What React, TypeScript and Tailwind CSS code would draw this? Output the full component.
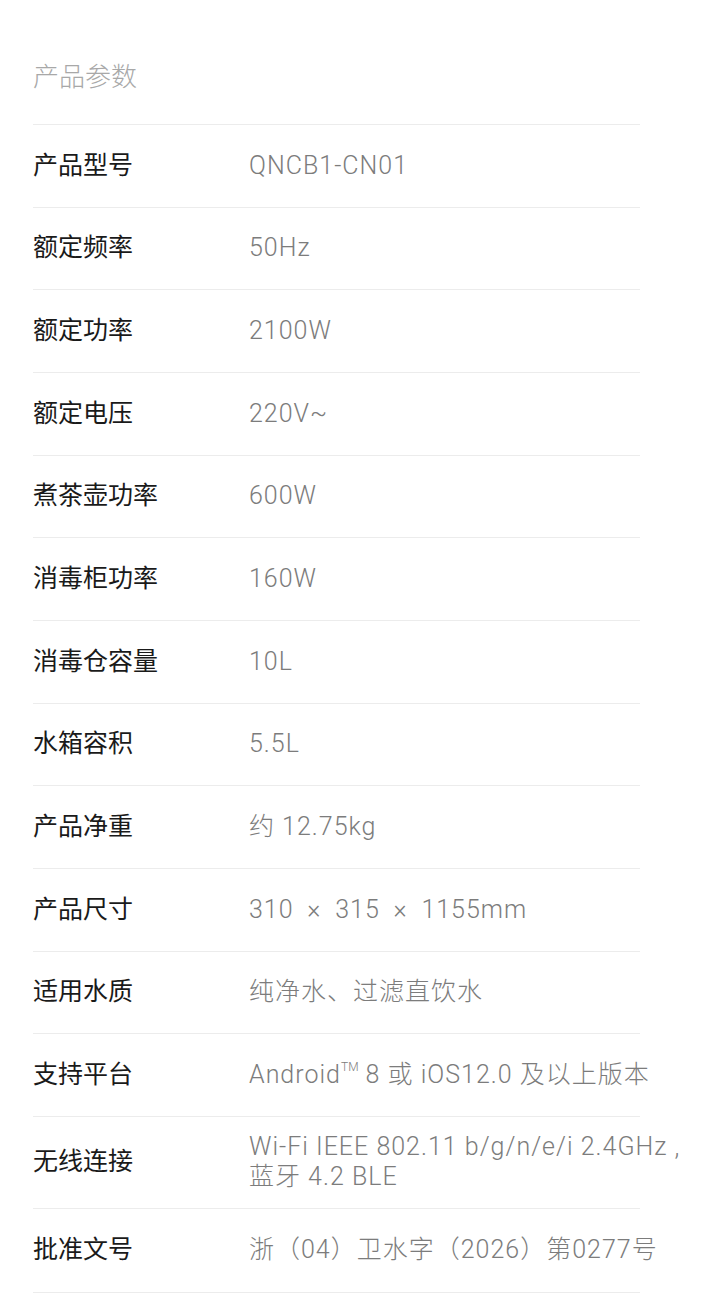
const specs: { label: string; value: React.ReactNode; rowH?: string }[] = [
  { label: '产品型号', value: 'QNCB1-CN01' },
  { label: '额定频率', value: '50Hz' },
  { label: '额定功率', value: '2100W' },
  { label: '额定电压', value: '220V~' },
  { label: '煮茶壶功率', value: '600W' },
  { label: '消毒柜功率', value: '160W' },
  { label: '消毒仓容量', value: '10L' },
  { label: '水箱容积', value: '5.5L' },
  { label: '产品净重', value: '约 12.75kg' },
  { label: '产品尺寸', value: '310\u2002×\u2002315\u2002×\u20021155mm' },
  { label: '适用水质', value: '纯净水、过滤直饮水' },
  {
    label: '支持平台',
    value: (
      <>
        Android<sup className="text-[12px] align-[0.5em] leading-none tracking-normal">TM</sup> 8 或 iOS12.0 及以上版本
      </>
    ),
  },
  {
    label: '无线连接',
    value: (
      <>
        Wi-Fi IEEE 802.11 b/g/n/e/i 2.4GHz ,
        <br />
        蓝牙 4.2 BLE
      </>
    ),
    rowH: 'h-[92px]',
  },
  { label: '批准文号', value: '浙（04）卫水字（2026）第0277号', rowH: 'h-[84px]' },
];

export default function App() {
  return (
    <div
      className="min-h-screen bg-white pl-[33px]"
      style={{ fontFamily: 'Roboto, "Noto Sans CJK SC", sans-serif' }}
    >
      <h2 className="pt-[60px] mb-[30px] text-[26px] leading-[34px] font-light text-[#a8a8a8]">
        产品参数
      </h2>

      <div className="w-[607px] border-b border-[#ececec]">
        {specs.map(spec => (
          <div
            key={spec.label}
            className={`flex items-center border-t border-[#ececec] ${spec.rowH ?? 'h-[82.67px]'}`}
          >
            <div className="w-[216px] shrink-0 text-[25px] leading-[30px] text-[#1a1a1a]">
              {spec.label}
            </div>
            <div className="whitespace-nowrap text-[25px] leading-[30px] font-light tracking-[1px] text-[#7c7c7c]">
              {spec.value}
            </div>
          </div>
        ))}
      </div>
    </div>
  );
}
